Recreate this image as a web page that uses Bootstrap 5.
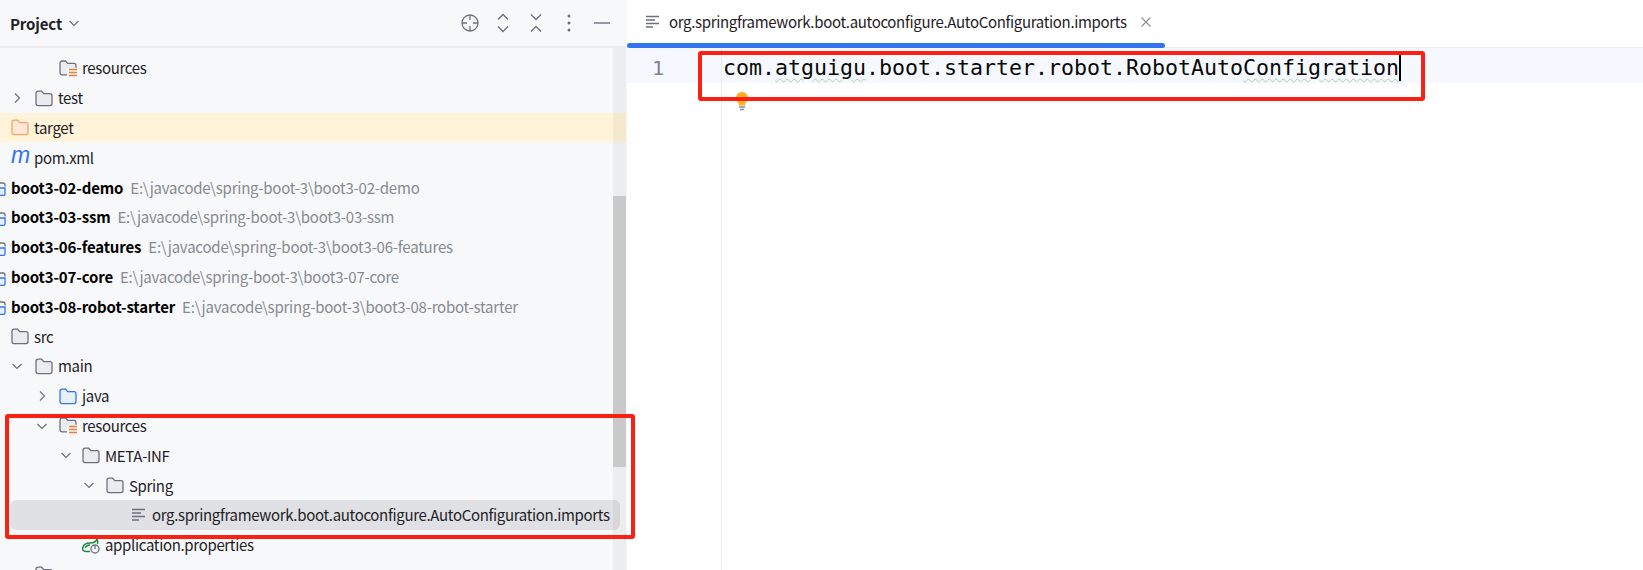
<!DOCTYPE html>
<html lang="en">
<head>
<meta charset="utf-8">
<title>IDE</title>
<link href="https://cdn.jsdelivr.net/npm/bootstrap@5.3.0/dist/css/bootstrap.min.css" rel="stylesheet">
<style>
html,body{height:570px;overflow:hidden;background:#fff}
body{font-family:"Noto Sans CJK SC","Noto Sans",sans-serif;color:#1f2125}
.ide-root{height:570px}
.side-pane{width:627px;background:#f7f8fa;flex:none;position:relative;overflow:hidden}
.side-head{height:48px;flex:none;border-bottom:2px solid #ebecf0;padding-left:10px;padding-right:9px}
.side-title{font-weight:700;font-size:15px;line-height:1;letter-spacing:-.15px;margin-right:6px}
.tool-slot{display:flex;justify-content:center;align-items:center;width:33px;height:30px}
.tree-box{padding-top:5px;min-height:0;overflow:hidden}
.tree-row{height:29.8px;font-size:15px;line-height:1;white-space:nowrap;position:relative;letter-spacing:-.33px}
.lvl0{padding-left:11px}.lvl1{padding-left:35px}.lvl2{padding-left:59px}.lvl3{padding-left:82px}.lvl4{padding-left:106px}
.lvl-a{left:11px}.lvl-b{left:36px}.lvl-c{left:60px}.lvl-d{left:83px}
.chev{position:absolute;top:9px;width:12px;height:12px}
.ico{width:18px;height:18px;flex:none;margin-right:5px}
.maven-m{width:18px;height:18px;flex:none;margin-right:5px;font-family:"Liberation Sans",sans-serif;font-style:italic;font-size:23px;line-height:14px;letter-spacing:0;color:#3574f0}
.row-target{background:#fff3d9}
.row-picked{background:#dfe1e5;border-radius:6px;margin-left:10px;margin-right:7px;padding-left:120px}
.row-picked .ico{margin-right:4px}
.proj-row{padding-left:11px}
.proj-mark{position:absolute;left:-8px;top:8px;width:15px;height:16px}
.proj-name{font-weight:700;color:#000;letter-spacing:-.15px}
.proj-path{color:#868a91;margin-left:7px;letter-spacing:-.22px}
.scroll-track{position:absolute;left:613px;top:48px;width:13px;height:522px;background:rgba(0,0,0,.045)}
.scroll-thumb{position:absolute;left:613px;top:196px;width:13px;height:271px;background:#c9c9ca}
.mark-box{position:absolute;border:4px solid #fb2014;border-radius:3px;pointer-events:none}
.mark-tree{left:5px;top:414px;width:630px;height:125px;z-index:3}
.mark-code{left:698px;top:51px;width:727px;height:50px;z-index:3}
.edit-pane{min-width:0;position:relative}
.tab-strip{height:48px;flex:none;border-bottom:1px solid #ebecf0;position:relative}
.tab-item{padding-left:17px;font-size:15px;letter-spacing:-.33px;height:44px;white-space:nowrap}
.tab-ico{margin-right:7px}
.tab-close{margin-left:13px}
.tab-bar{position:absolute;left:0;top:43px;width:538px;height:5px;background:#3574f0;border-radius:3px}
.code-wrap{height:522px}
.gutter{width:95px;border-right:1px solid #ebecf0;flex:none;position:relative}
.line-no{position:absolute;left:0;top:0;width:95px;height:35px;font-family:"DejaVu Sans Mono",monospace;font-size:20px;color:#7d828a;padding-left:25px;line-height:40px}
.line-bar{height:35px;background:#f5f8fe;position:relative}
.code-line{font-family:"DejaVu Sans Mono",monospace;font-size:21.6px;line-height:40px;padding-left:1px;color:#080808;white-space:pre}
.wavy{text-decoration:underline wavy #a3d3a5 1px;text-underline-offset:3px}
.caret-bar{display:inline-block;width:2px;height:30px;background:#000;vertical-align:-6px}
.bulb-icon{position:absolute;left:734px;top:92px;width:16px;height:20px;z-index:2}
</style>
</head>
<body>
<svg width="0" height="0" class="position-absolute">
<defs>
<symbol id="folder" viewBox="0 0 18 18"><path d="M1 4.200a2 2 0 0 1 2-2h3.600l2.200 2.400H15a2 2 0 0 1 2 2v8a2 2 0 0 1-2 2H3a2 2 0 0 1-2-2z" fill="#ebecf0" stroke="#6c707e" stroke-width="1.300"/></symbol>
<symbol id="folder-res" viewBox="0 0 18 18"><path d="M8 15.800H3a2 2 0 0 1-2-2V4a2 2 0 0 1 2-2h3.600l2.200 2.400H15a2 2 0 0 1 2 2v2.400" fill="#ebecf0" stroke="#6c707e" stroke-width="1.300"/><path d="M8.500 9h10v9h-10z" fill="#f7f8fa"/><path d="M10 10.500h9M10 13.500h9M10 16.500h9" stroke="#e66d17" stroke-width="1.600" opacity=".85"/></symbol>
<symbol id="folder-blue" viewBox="0 0 18 18"><path d="M1 4.200a2 2 0 0 1 2-2h3.600l2.200 2.400H15a2 2 0 0 1 2 2v8a2 2 0 0 1-2 2H3a2 2 0 0 1-2-2z" fill="#e7effd" stroke="#3574f0" stroke-width="1.300"/></symbol>
<symbol id="folder-orange" viewBox="0 0 18 18"><path d="M1 4.200a2 2 0 0 1 2-2h3.600l2.200 2.400H15a2 2 0 0 1 2 2v8a2 2 0 0 1-2 2H3a2 2 0 0 1-2-2z" fill="#ffe8d9" stroke="#f4a261" stroke-width="1.300"/></symbol>
<symbol id="lines" viewBox="0 0 18 18"><path d="M2 3.500h13M2 7h9M2 10.500h13M2 14h7" fill="none" stroke="#6c707e" stroke-width="1.400"/></symbol>
<symbol id="right" viewBox="0 0 12 12"><path d="M4 1.500 8.500 6 4 10.500" fill="none" stroke="#6c707e" stroke-width="1.200"/></symbol>
<symbol id="down" viewBox="0 0 12 12"><path d="M1.500 4 6 8.500 10.500 4" fill="none" stroke="#6c707e" stroke-width="1.200"/></symbol>
<symbol id="module" viewBox="0 0 15 16"><path d="M8 3h3a2 2 0 0 1 2 2v1.500" fill="none" stroke="#6c707e" stroke-width="1.300"/><path d="M2 8h11v6a1.500 1.500 0 0 1-1.500 1.500h-8A1.500 1.500 0 0 1 2 14z" fill="#e7effd" stroke="#3574f0" stroke-width="1.300"/></symbol>
</defs>
</svg>
<div class="ide-root d-flex position-relative">
  <aside class="side-pane d-flex flex-column">
    <div class="side-head d-flex align-items-center justify-content-between">
      <div class="d-flex align-items-center">
        <span class="side-title">Project</span>
        <svg width="12" height="12" viewBox="0 0 12 12"><use href="#down"/></svg>
      </div>
      <div class="d-flex align-items-center">
        <span class="tool-slot"><svg width="20" height="20" viewBox="0 0 20 20" fill="none" stroke="#6c707e" stroke-width="1.300"><circle cx="10" cy="10" r="8"/><path d="M10 2v5M10 13v5M2 10h5M13 10h5"/></svg></span>
        <span class="tool-slot"><svg width="18" height="22" viewBox="0 0 18 22" fill="none" stroke="#6c707e" stroke-width="1.300"><path d="M4 7.500 9 2.500l5 5M4 14.500l5 5 5-5"/></svg></span>
        <span class="tool-slot"><svg width="18" height="22" viewBox="0 0 18 22" fill="none" stroke="#6c707e" stroke-width="1.300"><path d="M4 2.500l5 5 5-5M4 19.500l5-5 5 5"/></svg></span>
        <span class="tool-slot"><svg width="6" height="20" viewBox="0 0 6 20" fill="#6c707e"><circle cx="3" cy="3" r="1.500"/><circle cx="3" cy="10" r="1.500"/><circle cx="3" cy="17" r="1.500"/></svg></span>
        <span class="tool-slot"><svg width="16" height="4" viewBox="0 0 16 4"><path d="M0 2h16" stroke="#6c707e" stroke-width="1.400"/></svg></span>
      </div>
    </div>
    <div class="tree-box flex-grow-1">
      <div class="tree-row lvl2 d-flex align-items-center"><svg class="ico"><use href="#folder-res"/></svg>resources</div>
      <div class="tree-row lvl1 d-flex align-items-center"><svg class="chev lvl-a"><use href="#right"/></svg><svg class="ico"><use href="#folder"/></svg>test</div>
      <div class="tree-row lvl0 row-target d-flex align-items-center"><svg class="ico"><use href="#folder-orange"/></svg>target</div>
      <div class="tree-row lvl0 d-flex align-items-center"><span class="maven-m">m</span>pom.xml</div>
      <div class="tree-row proj-row d-flex align-items-center"><svg class="proj-mark"><use href="#module"/></svg><span class="proj-name">boot3-02-demo</span><span class="proj-path">E:\javacode\spring-boot-3\boot3-02-demo</span></div>
      <div class="tree-row proj-row d-flex align-items-center"><svg class="proj-mark"><use href="#module"/></svg><span class="proj-name">boot3-03-ssm</span><span class="proj-path">E:\javacode\spring-boot-3\boot3-03-ssm</span></div>
      <div class="tree-row proj-row d-flex align-items-center"><svg class="proj-mark"><use href="#module"/></svg><span class="proj-name">boot3-06-features</span><span class="proj-path">E:\javacode\spring-boot-3\boot3-06-features</span></div>
      <div class="tree-row proj-row d-flex align-items-center"><svg class="proj-mark"><use href="#module"/></svg><span class="proj-name">boot3-07-core</span><span class="proj-path">E:\javacode\spring-boot-3\boot3-07-core</span></div>
      <div class="tree-row proj-row d-flex align-items-center"><svg class="proj-mark"><use href="#module"/></svg><span class="proj-name">boot3-08-robot-starter</span><span class="proj-path">E:\javacode\spring-boot-3\boot3-08-robot-starter</span></div>
      <div class="tree-row lvl0 d-flex align-items-center"><svg class="ico"><use href="#folder"/></svg>src</div>
      <div class="tree-row lvl1 d-flex align-items-center"><svg class="chev lvl-a"><use href="#down"/></svg><svg class="ico"><use href="#folder"/></svg>main</div>
      <div class="tree-row lvl2 d-flex align-items-center"><svg class="chev lvl-b"><use href="#right"/></svg><svg class="ico"><use href="#folder-blue"/></svg>java</div>
      <div class="tree-row lvl2 d-flex align-items-center"><svg class="chev lvl-b"><use href="#down"/></svg><svg class="ico"><use href="#folder-res"/></svg>resources</div>
      <div class="tree-row lvl3 d-flex align-items-center"><svg class="chev lvl-c"><use href="#down"/></svg><svg class="ico"><use href="#folder"/></svg>META-INF</div>
      <div class="tree-row lvl4 d-flex align-items-center"><svg class="chev lvl-d"><use href="#down"/></svg><svg class="ico"><use href="#folder"/></svg>Spring</div>
      <div class="tree-row row-picked d-flex align-items-center"><svg class="ico"><use href="#lines"/></svg>org.springframework.boot.autoconfigure.AutoConfiguration.imports</div>
      <div class="tree-row lvl3 d-flex align-items-center"><svg class="ico" viewBox="0 0 18 18" fill="none"><path d="M8 15.500H4c-3 0-4-2-3-4.500 1-3 4-4 7-4 3 0 6-1 7-4 1 2 1 3 .500 5" stroke="#208a3c" stroke-width="1.500"/><path d="M3 12c1-2 3-3 5-3" stroke="#208a3c" stroke-width="1.300"/><circle cx="13" cy="13" r="4" stroke="#6c707e" stroke-width="1.300" fill="#f7f8fa"/><path d="M13 9.500V13" stroke="#6c707e" stroke-width="1.300"/></svg>application.properties</div>
      <div class="tree-row lvl1 d-flex align-items-center"><svg class="chev lvl-a"><use href="#right"/></svg><svg class="ico"><use href="#folder"/></svg></div>
    </div>
    <div class="scroll-track"></div>
    <div class="scroll-thumb"></div>
  </aside>
  <main class="edit-pane flex-grow-1 d-flex flex-column">
    <div class="tab-strip">
      <div class="tab-item d-flex align-items-center"><svg class="ico tab-ico"><use href="#lines"/></svg>org.springframework.boot.autoconfigure.AutoConfiguration.imports<svg class="tab-close" width="12" height="12" viewBox="0 0 12 12"><path d="M1.500 1.500l9 9M10.500 1.500l-9 9" stroke="#868a91" stroke-width="1.100"/></svg></div>
      <div class="tab-bar"></div>
    </div>
    <div class="code-wrap d-flex">
      <div class="gutter"><div class="line-bar"></div><div class="line-no">1</div></div>
      <div class="flex-grow-1"><div class="line-bar code-line">com.<span class="wavy">atguigu</span>.boot.starter.robot.RobotAuto<span class="wavy">Configration</span><span class="caret-bar"></span></div></div>
    </div>
  </main>
  <div class="mark-box mark-tree"></div>
  <div class="mark-box mark-code"></div>
  <svg class="bulb-icon" viewBox="0 0 16 20"><path d="M8 0a6 6 0 0 0-4 10.500c1 1 1 2 1 3h6c0-1 0-2 1-3A6 6 0 0 0 8 0z" fill="#fdb022"/><path d="M5 15h6M6 17.500h4" stroke="#8a8d94" stroke-width="1.500"/></svg>
</div>
<script src="https://cdn.jsdelivr.net/npm/bootstrap@5.3.0/dist/js/bootstrap.bundle.min.js"></script>
</body>
</html>
